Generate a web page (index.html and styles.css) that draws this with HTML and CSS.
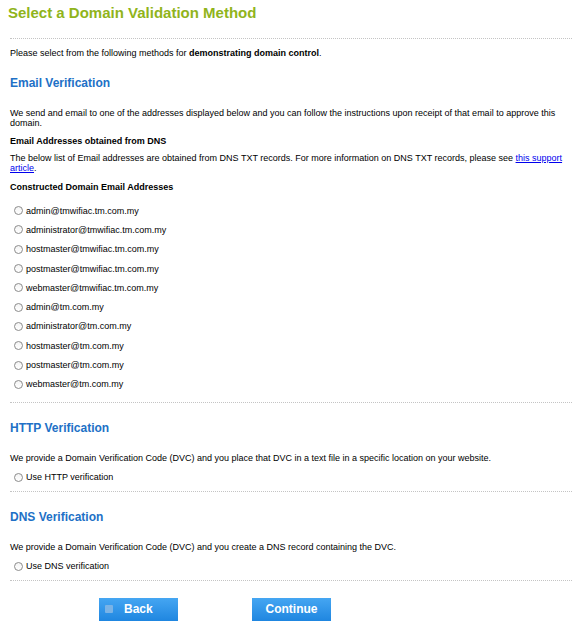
FILE: index.html
```html
<!DOCTYPE html>
<html>
<head>
<meta charset="utf-8">
<link rel="stylesheet" href="styles.css">
</head>
<body>
<div class="page">
  <h1 class="title">Select a Domain Validation Method</h1>
  <div class="rule rule-top"></div>
  <p class="intro">Please select from the following methods for <b>demonstrating domain control</b>.</p>

  <h2 class="section-title">Email Verification</h2>
  <p class="text">We send and email to one of the addresses displayed below and you can follow the instructions upon receipt of that email to approve this domain.</p>
  <h3 class="sub">Email Addresses obtained from DNS</h3>
  <p class="text text-dns">The below list of Email addresses are obtained from DNS TXT records. For more information on DNS TXT records, please see <a href="#">this support article</a>.</p>
  <h3 class="sub sub-constructed">Constructed Domain Email Addresses</h3>
  <ul class="options">
    <li><label><input type="radio" name="m"> admin@tmwifiac.tm.com.my</label></li>
    <li><label><input type="radio" name="m"> administrator@tmwifiac.tm.com.my</label></li>
    <li><label><input type="radio" name="m"> hostmaster@tmwifiac.tm.com.my</label></li>
    <li><label><input type="radio" name="m"> postmaster@tmwifiac.tm.com.my</label></li>
    <li><label><input type="radio" name="m"> webmaster@tmwifiac.tm.com.my</label></li>
    <li><label><input type="radio" name="m"> admin@tm.com.my</label></li>
    <li><label><input type="radio" name="m"> administrator@tm.com.my</label></li>
    <li><label><input type="radio" name="m"> hostmaster@tm.com.my</label></li>
    <li><label><input type="radio" name="m"> postmaster@tm.com.my</label></li>
    <li><label><input type="radio" name="m"> webmaster@tm.com.my</label></li>
  </ul>
  <div class="rule"></div>

  <h2 class="section-title">HTTP Verification</h2>
  <p class="text">We provide a Domain Verification Code (DVC) and you place that DVC in a text file in a specific location on your website.</p>
  <label class="single"><input type="radio" name="m"> Use HTTP verification</label>
  <div class="rule rule-after-single"></div>

  <h2 class="section-title">DNS Verification</h2>
  <p class="text">We provide a Domain Verification Code (DVC) and you create a DNS record containing the DVC.</p>
  <label class="single"><input type="radio" name="m"> Use DNS verification</label>
  <div class="rule rule-after-single"></div>

  <div class="actions">
    <button class="btn btn-back"><span class="btn-icon"></span>Back</button>
    <button class="btn btn-continue">Continue</button>
  </div>
</div>
</body>
</html>
```

FILE: styles.css
```css
html, body {
  margin: 0;
  padding: 0;
  background: #ffffff;
}
body {
  font-family: "Liberation Sans", Arial, sans-serif;
  font-size: 9px;
  color: #000;
}
.page {
  padding: 0 4px 0 10px;
}
.title {
  margin: 0 0 0 -2px;
  padding-top: 4px;
  font-size: 15px;
  font-weight: bold;
  color: #90b41b;
  line-height: 18px;
}
.rule {
  border-top: 1px dotted #c4c4c4;
  margin: 8px -4px 0 0;
}
.rule-top {
  margin-top: 16px;
}
.rule-after-single {
  margin-top: 7px;
}
.intro {
  margin: 9px 0 0;
  line-height: 11px;
}
.section-title {
  margin: 17px 0 0;
  font-size: 12px;
  color: #2170c6;
  line-height: 15px;
}
.rule + .section-title {
  margin-top: 18px;
}
.text {
  margin: 17px 0 0;
  line-height: 10px;
}
.sub {
  margin: 8px 0 0;
  font-size: 9px;
  line-height: 11px;
}
.text-dns {
  margin-top: 6px;
}
.sub-constructed {
  margin-top: 9px;
}
.text a {
  color: #0000ee;
}
.options {
  list-style: none;
  margin: 8px 0 0;
  padding: 0;
}
.options li {
  height: 19.3px;
  display: flex;
  align-items: center;
}
label {
  display: flex;
  align-items: center;
  height: 13px;
}
input[type=radio] {
  appearance: none;
  -webkit-appearance: none;
  margin: 0 3px 0 4px;
  width: 9px;
  height: 9px;
  border: 1px solid #8c8c8c;
  border-radius: 50%;
  background: linear-gradient(#f4f4f4, #ffffff);
  box-sizing: border-box;
}
.single {
  margin-top: 8px;
}
.actions {
  display: flex;
  gap: 74px;
  padding-left: 89px;
  margin-top: 17px;
}
.btn {
  width: 79px;
  height: 23px;
  border: none;
  background: linear-gradient(#45a6f2, #1f86e0);
  color: #fff;
  font-family: "Liberation Sans", Arial, sans-serif;
  font-weight: bold;
  font-size: 12px;
  display: flex;
  align-items: center;
  justify-content: center;
  padding: 0;
}
.btn-back {
  justify-content: flex-start;
  padding-left: 6px;
}
.btn-icon {
  width: 8px;
  height: 8px;
  background: #7ab3e6;
  border-radius: 1px;
  margin-right: 11px;
}
```
